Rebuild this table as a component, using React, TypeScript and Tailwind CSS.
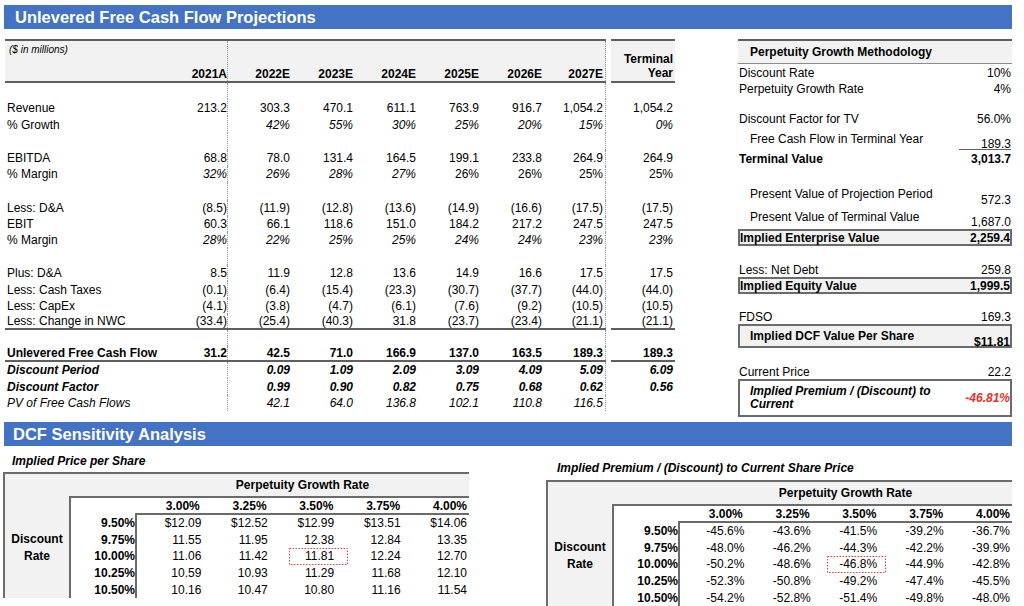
import type { ReactNode } from 'react';

type RowDef = {
  label?: string;
  vals?: string[];
  term?: string;
  h: string;
  line?: boolean;
  labelCls?: string;
  valCls?: string;
  italicIdx?: number[];
};

const years = ['2021A', '2022E', '2023E', '2024E', '2025E', '2026E', '2027E'];

const cellCls = [
  'w-[62px] pr-0 border-r border-dotted border-[#9a9a9a]',
  'w-[63px] pr-[1px]',
  'w-[63px] pr-[1px]',
  'w-[63px] pr-[1px]',
  'w-[63px] pr-[1px]',
  'w-[63px] pr-[1px]',
  'w-[63px] pr-[2px] border-r border-dotted border-[#9a9a9a]'
];

const rows: RowDef[] = [
  { h: 'h-[16px]' },
  {
    label: 'Revenue',
    vals: ['213.2', '303.3', '470.1', '611.1', '763.9', '916.7', '1,054.2'],
    term: '1,054.2',
    h: 'h-[17px]'
  },
  {
    label: '% Growth',
    vals: ['', '42%', '55%', '30%', '25%', '20%', '15%'],
    term: '0%',
    valCls: 'italic',
    h: 'h-[17px]'
  },
  { h: 'h-[17px]' },
  {
    label: 'EBITDA',
    vals: ['68.8', '78.0', '131.4', '164.5', '199.1', '233.8', '264.9'],
    term: '264.9',
    h: 'h-[16px]'
  },
  {
    label: '% Margin',
    vals: ['32%', '26%', '28%', '27%', '26%', '26%', '25%'],
    term: '25%',
    italicIdx: [0, 1, 2, 3],
    h: 'h-[16px]'
  },
  { h: 'h-[18px]' },
  {
    label: 'Less: D&A',
    vals: ['(8.5)', '(11.9)', '(12.8)', '(13.6)', '(14.9)', '(16.6)', '(17.5)'],
    term: '(17.5)',
    h: 'h-[16px]'
  },
  {
    label: 'EBIT',
    vals: ['60.3', '66.1', '118.6', '151.0', '184.2', '217.2', '247.5'],
    term: '247.5',
    h: 'h-[16px]'
  },
  {
    label: '% Margin',
    vals: ['28%', '22%', '25%', '25%', '24%', '24%', '23%'],
    term: '23%',
    valCls: 'italic',
    h: 'h-[16px]'
  },
  { h: 'h-[17px]' },
  {
    label: 'Plus: D&A',
    vals: ['8.5', '11.9', '12.8', '13.6', '14.9', '16.6', '17.5'],
    term: '17.5',
    h: 'h-[16px]'
  },
  {
    label: 'Less: Cash Taxes',
    vals: ['(0.1)', '(6.4)', '(15.4)', '(23.3)', '(30.7)', '(37.7)', '(44.0)'],
    term: '(44.0)',
    h: 'h-[17px]'
  },
  {
    label: 'Less: CapEx',
    vals: ['(4.1)', '(3.8)', '(4.7)', '(6.1)', '(7.6)', '(9.2)', '(10.5)'],
    term: '(10.5)',
    h: 'h-[16px]'
  },
  {
    label: 'Less: Change in NWC',
    vals: ['(33.4)', '(25.4)', '(40.3)', '31.8', '(23.7)', '(23.4)', '(21.1)'],
    term: '(21.1)',
    line: true,
    h: 'h-[16px]'
  },
  { h: 'h-[16px]' },
  {
    label: 'Unlevered Free Cash Flow',
    vals: ['31.2', '42.5', '71.0', '166.9', '137.0', '163.5', '189.3'],
    term: '189.3',
    labelCls: 'font-bold',
    valCls: 'font-bold',
    line: true,
    h: 'h-[16px]'
  },
  {
    label: 'Discount Period',
    vals: ['', '0.09', '1.09', '2.09', '3.09', '4.09', '5.09'],
    term: '6.09',
    labelCls: 'font-bold italic',
    valCls: 'font-bold italic',
    h: 'h-[16px]'
  },
  {
    label: 'Discount Factor',
    vals: ['', '0.99', '0.90', '0.82', '0.75', '0.68', '0.62'],
    term: '0.56',
    labelCls: 'font-bold italic',
    valCls: 'font-bold italic',
    h: 'h-[17px]'
  },
  {
    label: 'PV of Free Cash Flows',
    vals: ['', '42.1', '64.0', '136.8', '102.1', '110.8', '116.5'],
    term: '',
    labelCls: 'italic',
    valCls: 'italic',
    h: 'h-[16px]'
  }
];

function ProjectionRow({ row }: { row: RowDef }) {
  const line = row.line ? 'border-b-2 border-[#5f5f5f]' : '';
  return (
    <div className={`flex ${row.h}`}>
      <div className={`flex ${line}`}>
        <div className={`flex w-[161px] items-center pl-[2px] ${row.labelCls ?? ''}`}>{row.label}</div>
        {cellCls.map((c, i) => (
          <div
            className={`flex items-center justify-end ${c} ${row.valCls ?? ''} ${row.italicIdx?.includes(i) ? 'italic' : ''}`}
            key={i}
          >
            {row.vals?.[i]}
          </div>
        ))}
      </div>
      <div className="w-[5px]" />
      <div className={`flex w-[64px] items-center justify-end pr-[2px] ${line} ${row.valCls ?? ''}`}>{row.term}</div>
    </div>
  );
}

function ProjectionTable() {
  return (
    <div className="flex w-[670px] flex-col">
      <div className="flex h-[44px]">
        <div className="flex border-y-2 border-[#5f5f5f] bg-[#f2f2f2]">
          <div className="w-[161px] pl-[4px] pt-[3px] text-[10px] italic leading-[12px]">($ in millions)</div>
          {years.map((y, i) => (
            <div className={`flex items-end justify-end pb-[1px] font-bold ${cellCls[i]}`} key={y}>
              {y}
            </div>
          ))}
        </div>
        <div className="w-[5px]" />
        <div className="flex w-[64px] flex-col items-end justify-end border-y-2 border-[#5f5f5f] bg-[#f2f2f2] pr-[2px] pb-[1px] font-bold leading-[14px]">
          <span>Terminal</span>
          <span>Year</span>
        </div>
      </div>
      {rows.map((r, i) => (
        <ProjectionRow key={i} row={r} />
      ))}
    </div>
  );
}

function Line({ label, value, h, cls = '' }: { label: ReactNode; value: ReactNode; h: string; cls?: string }) {
  return (
    <div className={`flex items-center justify-between pl-[1px] pr-[1px] ${h} ${cls}`}>
      <span>{label}</span>
      <span>{value}</span>
    </div>
  );
}

function PerpetuityPanel() {
  return (
    <div className="ml-[63px] flex w-[274px] flex-col">
      <div className="flex h-[25px] items-center border-t-2 border-b border-t-[#5f5f5f] border-b-[#8c8c8c] bg-[#f2f2f2] pl-[12px] font-bold">
        Perpetuity Growth Methodology
      </div>
      <Line h="h-[17px]" label="Discount Rate" value="10%" />
      <Line h="h-[16px]" label="Perpetuity Growth Rate" value="4%" />
      <div className="h-[14px]" />
      <Line h="h-[16px]" label="Discount Factor for TV" value="56.0%" />
      <div className="flex h-[23px] justify-between pr-[1px]">
        <span className="self-center pl-[12px]">Free Cash Flow in Terminal Year</span>
        <span className="h-[11px] w-[52px] self-end border-b border-[#5f5f5f] text-right leading-[10px]">189.3</span>
      </div>
      <Line cls="font-bold" h="h-[18px]" label="Terminal Value" value="3,013.7" />
      <div className="h-[18px]" />
      <div className="flex h-[22px] justify-between pr-[1px]">
        <span className="self-start pl-[12px] leading-[16px]">Present Value of Projection Period</span>
        <span className="self-end leading-[16px]">572.3</span>
      </div>
      <div className="flex h-[21px] justify-between pr-[1px]">
        <span className="self-start pt-[1px] pl-[12px] leading-[16px]">Present Value of Terminal Value</span>
        <span className="self-end leading-[13px]">1,687.0</span>
      </div>
      <div className="flex h-[17px] items-center justify-between border-2 border-[#6b6b6b] bg-[#f2f2f2] pt-[1px] font-bold">
        <span>Implied Enterprise Value</span>
        <span>2,259.4</span>
      </div>
      <div className="h-[16px]" />
      <Line h="h-[15px]" label="Less: Net Debt" value="259.8" />
      <div className="flex h-[17px] items-center justify-between border-2 border-[#6b6b6b] bg-[#f2f2f2] pt-[1px] font-bold">
        <span>Implied Equity Value</span>
        <span>1,999.5</span>
      </div>
      <div className="h-[15px]" />
      <Line h="h-[15px]" label="FDSO" value="169.3" />
      <div className="flex h-[24px] justify-between border-2 border-[#6b6b6b] bg-[#f2f2f2] font-bold">
        <span className="self-center pl-[10px]">Implied DCF Value Per Share</span>
        <span className="self-end leading-[8px]">$11.81</span>
      </div>
      <div className="h-[16px]" />
      <Line h="h-[15px]" label="Current Price" value="22.2" />
      <div className="flex h-[38px] items-center justify-between border-2 border-[#6b6b6b] font-bold italic">
        <span className="pl-[10px] leading-[13.5px]">
          Implied Premium / (Discount) to
          <br />
          Current
        </span>
        <span className="text-[#e8302c]">-46.81%</span>
      </div>
    </div>
  );
}

type SensProps = {
  values: string[][];
  boxCls: string;
};

const growth = ['3.00%', '3.25%', '3.50%', '3.75%', '4.00%'];
const rates = ['9.50%', '9.75%', '10.00%', '10.25%', '10.50%'];

const priceVals = [
  ['$12.09', '$12.52', '$12.99', '$13.51', '$14.06'],
  ['11.55', '11.95', '12.38', '12.84', '13.35'],
  ['11.06', '11.42', '11.81', '12.24', '12.70'],
  ['10.59', '10.93', '11.29', '11.68', '12.10'],
  ['10.16', '10.47', '10.80', '11.16', '11.54']
];

const premiumVals = [
  ['-45.6%', '-43.6%', '-41.5%', '-39.2%', '-36.7%'],
  ['-48.0%', '-46.2%', '-44.3%', '-42.2%', '-39.9%'],
  ['-50.2%', '-48.6%', '-46.8%', '-44.9%', '-42.8%'],
  ['-52.3%', '-50.8%', '-49.2%', '-47.4%', '-45.5%'],
  ['-54.2%', '-52.8%', '-51.4%', '-49.8%', '-48.0%']
];

// red dotted "base case" marker
function BaseCaseBox({ className }: { className: string }) {
  return (
    <svg className={`absolute top-0 ${className}`} height="17" width="59">
      <rect fill="none" height="16" stroke="#e23b3b" strokeDasharray="1.5 1.5" width="58" x="0.5" y="0.5" />
    </svg>
  );
}

function SensitivityTable({ values, boxCls }: SensProps) {
  return (
    <div className="w-[466px] border-t-2 border-l-2 border-[#6b6b6b] bg-[#f2f2f2]">
      <div className="flex h-[22px] items-center">
        <div className="w-[131px]" />
        <div className="flex-1 text-center font-bold">Perpetuity Growth Rate</div>
      </div>
      <div className="flex">
        <div className="flex w-[64px] flex-col items-center justify-center pt-[2px] font-bold leading-[16.6px]">
          <span>Discount</span>
          <span>Rate</span>
        </div>
        <div className="flex-1 border-t-2 border-l-2 border-[#6b6b6b] bg-white">
          <div className="flex h-[17px]">
            <div className="w-[64px]" />
            <div className="grid w-[334px] grid-cols-5 items-center border-b-2 border-[#6b6b6b] font-bold">
              {growth.map((g) => (
                <div className="pr-[2px] text-right" key={g}>
                  {g}
                </div>
              ))}
            </div>
          </div>
          {rates.map((r, ri) => (
            <div className="flex h-[16.6px]" key={r}>
              <div className="flex w-[64px] items-center justify-end font-bold">{r}</div>
              <div className="grid w-[334px] grid-cols-5 items-center border-l-2 border-[#6b6b6b]">
                {values[ri].map((v, ci) => (
                  <div className="relative flex h-full items-center justify-end pr-[2px]" key={ci}>
                    {ri === 2 && ci === 2 ? <BaseCaseBox className={boxCls} /> : null}
                    {v}
                  </div>
                ))}
              </div>
            </div>
          ))}
        </div>
      </div>
    </div>
  );
}

export default function App() {
  return (
    <div className="h-[606px] w-[1024px] overflow-hidden bg-white pt-[5px] font-['Liberation_Sans',Arial,sans-serif] text-[12px] leading-none text-black">
      <div className="ml-[4px] flex h-[24px] w-[1008px] items-center bg-[#4472c4] pl-[11px] text-[16.5px] font-bold text-white">
        Unlevered Free Cash Flow Projections
      </div>

      <div className="mt-[10px] ml-[5px] flex h-[383px]">
        <ProjectionTable />
        <PerpetuityPanel />
      </div>

      <div className="ml-[4px] flex h-[24px] w-[1008px] items-center bg-[#4472c4] pl-[9px] text-[16.5px] font-bold text-white">
        DCF Sensitivity Analysis
      </div>

      <div className="flex">
        <div className="ml-[3px] flex flex-col">
          <div className="mt-[7px] h-[16px] pl-[9px] leading-[16px] font-bold italic">Implied Price per Share</div>
          <div className="mt-[3px]">
            <SensitivityTable boxCls="left-[19px]" values={priceVals} />
          </div>
        </div>
        <div className="ml-[77px] flex flex-col">
          <div className="mt-[14px] h-[16px] pl-[11px] leading-[16px] font-bold italic">
            Implied Premium / (Discount) to Current Share Price
          </div>
          <div className="mt-[4px]">
            <SensitivityTable boxCls="left-[14px]" values={premiumVals} />
          </div>
        </div>
      </div>
    </div>
  );
}
